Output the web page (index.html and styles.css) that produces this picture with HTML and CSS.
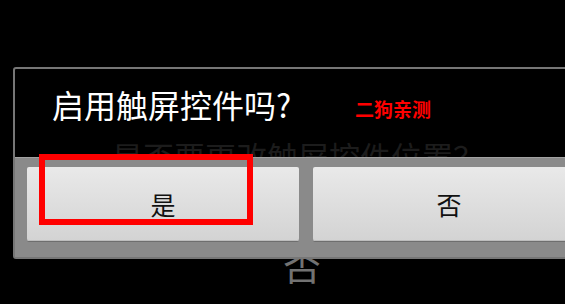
FILE: index.html
```html
<!DOCTYPE html>
<html lang="zh-CN">
<head>
<meta charset="utf-8">
<link rel="stylesheet" href="styles.css">
</head>
<body>
<div class="screen">
  <div class="backdrop">
    <p class="back-msg">是否要更改触屏控件位置？</p>
    <p class="back-no">否</p>
  </div>

  <div class="dialog">
    <div class="dialog-head">
      <h1 class="dialog-title">启用触屏控件吗?</h1>
      <span class="watermark">二狗亲测</span>
    </div>
    <div class="dialog-actions">
      <button class="btn">是</button>
      <button class="btn">否</button>
    </div>
  </div>

  <div class="highlight"></div>
</div>
</body>
</html>
```

FILE: styles.css
```css
html, body {
  margin: 0;
  padding: 0;
  background: #000;
}

.screen {
  position: relative;
  width: 565px;
  height: 304px;
  overflow: hidden;
  background: #000;
  font-family: "Noto Sans CJK SC", "Noto Sans", sans-serif;
}

.backdrop {
  display: flex;
  flex-direction: column;
}

.back-msg {
  margin: 140px 0 0 112px;
  font-size: 31px;
  line-height: 31px;
  color: #1c1c1c;
  white-space: nowrap;
}

.back-no {
  margin: 74px 0 0 283px;
  font-size: 38px;
  line-height: 38px;
  color: #727272;
}

.dialog {
  position: absolute;
  left: 13px;
  top: 67px;
  width: 587px;
  border: 2px solid #767676;
  border-radius: 3px;
  background: transparent;
  display: flex;
  flex-direction: column;
}

.dialog-head {
  position: relative;
  height: 89px;
  box-sizing: border-box;
  padding: 19px 0 0 37px;
}

.dialog-title {
  margin: 0;
  font-size: 32px;
  line-height: 32px;
  font-weight: 400;
  color: #fff;
  white-space: nowrap;
}

.watermark {
  position: absolute;
  left: 340px;
  top: 30px;
  font-size: 19px;
  line-height: 19px;
  font-weight: 700;
  color: #f00;
}

.dialog-actions {
  display: flex;
  gap: 14px;
  padding: 9px 12px 16px;
  background: #8a8a8a;
  border-top: 1px solid #a2a2a2;
  margin-top: -1px;
}

.btn {
  width: 272px;
  height: 74px;
  flex: none;
  border: none;
  border-radius: 2px;
  background: linear-gradient(#e9e9e9, #d3d3d3);
  box-shadow: 0 1px 0 #6e6e6e, inset 0 -1px 0 #bdbdbd;
  font-family: "Noto Sans CJK SC", "Noto Sans", sans-serif;
  font-size: 25px;
  line-height: 25px;
  color: #111;
  padding: 0;
}

.highlight {
  position: absolute;
  left: 39px;
  top: 154px;
  width: 214px;
  height: 71px;
  box-sizing: border-box;
  border: 6px solid #ff0000;
}
```
